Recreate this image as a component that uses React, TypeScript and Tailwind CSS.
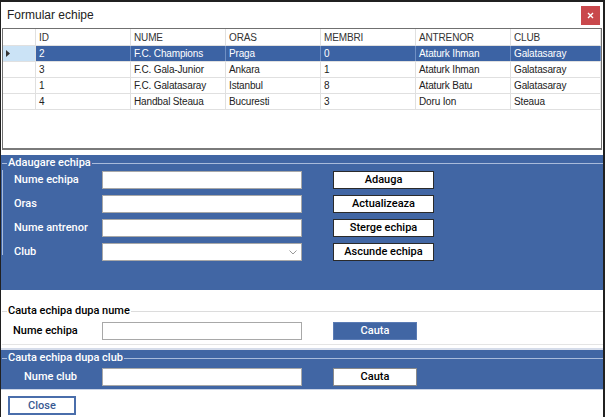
import React from "react";

const COLUMNS = ["ID", "NUME", "ORAS", "MEMBRI", "ANTRENOR", "CLUB"];

const ROWS = [
  ["2", "F.C. Champions", "Praga", "0", "Ataturk Ihman", "Galatasaray"],
  ["3", "F.C. Gala-Junior", "Ankara", "1", "Ataturk Ihman", "Galatasaray"],
  ["1", "F.C. Galatasaray", "Istanbul", "8", "Ataturk Batu", "Galatasaray"],
  ["4", "Handbal Steaua", "Bucuresti", "3", "Doru Ion", "Steaua"],
];

const COL_W = ["w-[95px]", "w-[95px]", "w-[95px]", "w-[95px]", "w-[95px]", "flex-1"];

const UI = { fontFamily: 'Roboto, "Liberation Sans", Arial, sans-serif' };

function Legend({ title, light }: { title: string; light?: boolean }) {
  const line = light ? "bg-[#a9bbdb]" : "bg-[#dcdcdc]";
  return (
    <div className="flex items-center h-[14px]" style={UI}>
      <div className={`w-[5px] h-px ${line}`} />
      <span className={`px-[1px] text-[11px] font-medium leading-[14px] ${light ? "text-white" : "text-black"}`}>
        {title}
      </span>
      <div className={`flex-1 h-px ${line}`} />
    </div>
  );
}

function Label({ text, pad, light }: { text: string; pad: string; light?: boolean }) {
  return (
    <span
      className={`w-[101px] shrink-0 whitespace-nowrap text-[11px] font-medium ${pad} ${light ? "text-white" : "text-black"}`}
      style={UI}
    >
      {text}
    </span>
  );
}

function Input({ select }: { select?: boolean }) {
  return (
    <div className="w-[200px] h-[18px] bg-white border border-[#a8a8a8] flex items-center justify-end pr-[4px]">
      {select && (
        <svg width="8" height="5" viewBox="0 0 8 5">
          <path d="M0.5 0.5 L4 4 L7.5 0.5" fill="none" stroke="#999" strokeWidth="1" />
        </svg>
      )}
    </div>
  );
}

function WhiteButton({ label }: { label: string }) {
  return (
    <button
      className="ml-[31px] w-[101px] h-[18px] bg-white border border-[#2a2a2a] text-[11px] font-medium leading-[16px] text-black"
      style={UI}
    >
      {label}
    </button>
  );
}

export default function App() {
  return (
    <div
      className="w-[605px] h-[417px] bg-[#202020] pt-[2px] pl-[1px] pr-[2px] overflow-hidden"
      style={{ fontFamily: '"Liberation Sans", Arial, sans-serif' }}
    >
      <div className="h-full bg-white flex flex-col">
        {/* Title bar */}
        <div className="h-[26px] shrink-0 flex items-center justify-between pl-[6px] pr-[3px]">
          <span className="text-[12px] text-[#222]">Formular echipe</span>
          <div className="w-[19px] h-[19px] bg-[#c9484c] flex items-center justify-center mt-[1px]">
            <svg width="7" height="7" viewBox="0 0 7 7">
              <path d="M1 1 L6 6 M6 1 L1 6" stroke="white" strokeWidth="1.4" />
            </svg>
          </div>
        </div>

        {/* Data grid */}
        <div className="mx-[1px] h-[122px] shrink-0 border border-[#707070] border-b-[2px] border-b-[#7a7a7a] bg-white text-[10px] tracking-[-0.15px] text-[#222]">
          <div className="flex h-[17px] border-b border-[#e0e0e0]">
            <div className="w-[33px] border-r border-[#e0e0e0]" />
            {COLUMNS.map((c, i) => (
              <div key={c} className={`${COL_W[i]} pl-[3px] leading-[17px] text-[#333] border-r border-[#e0e0e0]`}>
                {c}
              </div>
            ))}
          </div>
          {ROWS.map((row, r) => {
            const selected = r === 0;
            return (
              <div key={r} className="flex h-[16px] border-b border-[#e0e0e0]">
                <div
                  className={`w-[33px] border-r border-[#e0e0e0] flex items-center pl-[3px] ${
                    selected ? "bg-[#cbe3f6]" : ""
                  }`}
                >
                  {selected && (
                    <svg width="4" height="7" viewBox="0 0 4 7">
                      <path d="M0 0 L4 3.5 L0 7 Z" fill="#333" />
                    </svg>
                  )}
                </div>
                {row.map((cell, i) => (
                  <div
                    key={i}
                    className={`${COL_W[i]} pl-[3px] leading-[15px] border-r ${
                      selected ? "bg-[#3c63a4] text-white border-[#7090c4]" : "border-[#e0e0e0]"
                    }`}
                  >
                    {cell}
                  </div>
                ))}
              </div>
            );
          })}
        </div>

        <div className="h-[5px] shrink-0" />

        {/* Adaugare echipa */}
        <div className="h-[135px] shrink-0 bg-[#4166a4] pt-[1px]">
          <div className="pl-[1px]">
            <Legend title="Adaugare echipa" light />
          </div>
          <div className="relative pt-[1px]">
            <div className="absolute left-[1px] top-0 bottom-[6px] w-px bg-[#a9bbdb]" />
            <div className="flex flex-col gap-[6px]">
              <div className="flex items-center">
                <Label text="Nume echipa" pad="pl-[13px]" light />
                <Input />
                <WhiteButton label="Adauga" />
              </div>
              <div className="flex items-center">
                <Label text="Oras" pad="pl-[13px]" light />
                <Input />
                <WhiteButton label="Actualizeaza" />
              </div>
              <div className="flex items-center">
                <Label text="Nume antrenor" pad="pl-[13px]" light />
                <Input />
                <WhiteButton label="Sterge echipa" />
              </div>
              <div className="flex items-center">
                <Label text="Club" pad="pl-[13px]" light />
                <Input select />
                <WhiteButton label="Ascunde echipa" />
              </div>
            </div>
          </div>
        </div>

        {/* Cauta dupa nume */}
        <div className="h-[58px] shrink-0 pt-[14px] pl-[1px] flex flex-col">
          <Legend title="Cauta echipa dupa nume" />
          <div className="flex items-center h-[18px] mt-[4px] -ml-[1px]">
            <Label text="Nume echipa" pad="pl-[12px]" />
            <Input />
            <button
              className="ml-[31px] w-[84px] h-[18px] bg-[#4166a4] border border-[#5b7cb5] text-white text-[11px] font-medium leading-[16px]"
              style={UI}
            >
              Cauta
            </button>
          </div>
          <div className="mt-[4px] h-px bg-[#e4e4e4]" />
        </div>

        {/* Cauta dupa club */}
        <div className="h-[41px] shrink-0 bg-[#4166a4] border-t-[2px] border-[#d5dcea] pt-[1px] pl-[1px]">
          <Legend title="Cauta echipa dupa club" light />
          <div className="flex items-center h-[18px] mt-[3px] -ml-[1px]">
            <Label text="Nume club" pad="pl-[23px]" light />
            <Input />
            <button
              className="ml-[31px] w-[84px] h-[18px] bg-white border border-[#8a8a8a] text-black text-[11px] font-medium leading-[16px]"
              style={UI}
            >
              Cauta
            </button>
          </div>
        </div>

        {/* Close */}
        <div className="flex-1 pl-[7px] pt-[6px] border-t border-[#c9d3e6]">
          <button
            className="block w-[68px] h-[19px] border-[2px] border-[#4a6eab] bg-white text-[11px] font-medium text-[#3a5a92] leading-[15px]"
            style={UI}
          >
            Close
          </button>
        </div>
      </div>
    </div>
  );
}
